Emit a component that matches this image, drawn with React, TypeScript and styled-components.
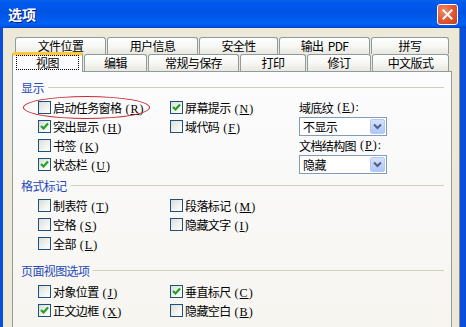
import React from "react";
import styled, { createGlobalStyle, css } from "styled-components";

const Global = createGlobalStyle`
  html, body { margin: 0; padding: 0; background: #ece9d8; }
  body { font-family: "Noto Sans CJK SC", "Noto Sans", sans-serif; }
`;

const FONT = `"Noto Sans CJK SC", "Noto Sans", sans-serif`;

const Window = styled.div`
  width: 466px;
  height: 327px;
  overflow: hidden;
  display: flex;
  flex-direction: column;
  font-family: ${FONT};
  font-size: 12px;
  letter-spacing: -0.6px;
  color: #000;
`;

const TitleBar = styled.div`
  height: 28px;
  flex: none;
  display: flex;
  align-items: center;
  justify-content: space-between;
  padding: 0 8px 0 8px;
  background: linear-gradient(
    to bottom,
    #0a62e8 0%,
    #0058ee 10%,
    #0054e3 45%,
    #0061f5 85%,
    #0055e5 94%,
    #003dc2 100%
  );
`;

const Title = styled.div`
  color: #fff;
  font-weight: 700;
  font-size: 14px;
  letter-spacing: 0;
  text-shadow: 1px 1px 0 #0a1a7a;
`;

const CloseButton = styled.div`
  width: 19px;
  height: 19px;
  border: 1px solid #fff;
  border-radius: 3px;
  background: radial-gradient(circle at 30% 30%, #f08a6a 0%, #e0562e 55%, #c2401c 100%);
  display: flex;
  align-items: center;
  justify-content: center;
`;

const Body = styled.div`
  flex: 1;
  display: flex;
  background: #0a4fdc;
`;

const Frame = styled.div`
  flex: 1;
  margin-left: 3px;
  margin-right: 6px;
  border-right: 1px solid #8a8a80;
  background: #ece9d8;
  padding: 9px 0 0 9px;
  display: flex;
  flex-direction: column;
`;

const TabRow = styled.div<{ $offset: number }>`
  display: flex;
  align-items: flex-end;
  gap: 1px;
  height: 17px;
  margin-left: ${(p) => p.$offset}px;
`;

const Tab = styled.div<{ $w: number; $active?: boolean }>`
  width: ${(p) => p.$w}px;
  box-sizing: border-box;
  height: 17px;
  border: 1px solid #919b9c;
  border-bottom: none;
  border-radius: 3px 3px 0 0;
  background: linear-gradient(to bottom, #ffffff 0%, #f7f7f4 50%, #e8e7e0 100%);
  display: flex;
  align-items: center;
  justify-content: center;
  line-height: 1;
  white-space: pre;
  ${(p) =>
    p.$active &&
    css`
      position: relative;
      z-index: 2;
      height: 20px;
      margin-bottom: -1px;
      border-top: 3px solid #ffc83c;
      box-shadow: inset 0 1px 0 #fbe4a6;
      background: #fcfcfe;
      padding: 0 2px 1px 2px;
    `}
`;

const FocusText = styled.span`
  flex: 1;
  align-self: stretch;
  display: flex;
  align-items: center;
  justify-content: center;
  outline: 1px dotted #000;
  outline-offset: -1px;
  margin: 0 1px 1px 1px;
`;

const Panel = styled.div`
  width: 440px;
  box-sizing: border-box;
  flex: 1;
  border: 1px solid #919b9c;
  border-bottom: none;
  background: linear-gradient(to bottom, #fcfcfe 0%, #f6f5f0 100%);
  padding: 7px 0 0 8px;
  display: flex;
  flex-direction: column;
`;

const GroupHeader = styled.div<{ $top: number }>`
  height: 16px;
  display: flex;
  align-items: center;
  gap: 4px;
  margin-top: ${(p) => p.$top}px;
  margin-right: 7px;
  color: #1f48b8;
  &::after {
    content: "";
    flex: 1;
    height: 1px;
    background: #d0d0bf;
  }
`;

const Rows = styled.div<{ $gap: number }>`
  display: grid;
  grid-template-columns: 132px 129px 88px;
  grid-auto-rows: 19px;
  margin-left: 17px;
  margin-top: ${(p) => p.$gap}px;
`;

const Item = styled.label`
  position: relative;
  display: flex;
  align-items: center;
  gap: 2px;
  white-space: nowrap;
`;

const Box = styled.span`
  width: 13px;
  height: 13px;
  box-sizing: border-box;
  border: 1px solid #1c5180;
  background: linear-gradient(135deg, #dcdcd7 0%, #f3f3ef 60%, #ffffff 100%);
  display: flex;
  align-items: center;
  justify-content: center;
  flex: none;
`;

const Mn = styled.span`
  margin-left: 4px;
  letter-spacing: 1px;
  font-family: "Liberation Serif", serif;
  font-size: 12px;
`;

const Ellipse = styled.span`
  position: absolute;
  left: -15px;
  top: -2px;
  width: 125px;
  height: 21px;
  border: 1.3px solid #c42a32;
  border-radius: 50%;
  pointer-events: none;
`;

const FieldLabel = styled.div`
  display: flex;
  align-items: center;
  white-space: nowrap;
`;

const Select = styled.div`
  height: 19px;
  box-sizing: border-box;
  border: 1px solid #7f9db9;
  background: #fff;
  display: flex;
  align-items: center;
  justify-content: space-between;
  padding: 0 1px 0 3px;
  align-self: center;
`;

const Arrow = styled.span`
  width: 15px;
  height: 15px;
  box-sizing: border-box;
  border: 1px solid #b5c8f1;
  border-radius: 2px;
  background: linear-gradient(to bottom, #d6e3fd 0%, #c1d3fb 50%, #b2c7f6 100%);
  display: flex;
  align-items: center;
  justify-content: center;
`;

const Empty = styled.span``;

function Check() {
  return (
    <svg width="9" height="9" viewBox="0 0 9 9">
      <path d="M1 4 L3.5 6.5 L8 1.5" fill="none" stroke="#21a121" strokeWidth="2.2" />
    </svg>
  );
}

function CB({ label, m, checked, circled }: { label: string; m: string; checked?: boolean; circled?: boolean }) {
  return (
    <Item>
      <Box>{checked && <Check />}</Box>
      <span>
        {label}
        <Mn>
          (<u>{m}</u>)
        </Mn>
      </span>
      {circled && <Ellipse />}
    </Item>
  );
}

function Drop({ value }: { value: string }) {
  return (
    <Select>
      <span>{value}</span>
      <Arrow>
        <svg width="9" height="7" viewBox="0 0 9 7">
          <path d="M1 1.5 L4.5 5 L8 1.5" fill="none" stroke="#4d6185" strokeWidth="2" />
        </svg>
      </Arrow>
    </Select>
  );
}

export default function App() {
  return (
    <>
      <Global />
      <Window>
        <TitleBar>
          <Title>选项</Title>
          <CloseButton>
            <svg width="11" height="11" viewBox="0 0 11 11">
              <path d="M1.5 1.5 L9.5 9.5 M9.5 1.5 L1.5 9.5" stroke="#fff" strokeWidth="2" strokeLinecap="square" />
            </svg>
          </CloseButton>
        </TitleBar>
        <Body>
          <Frame>
            <TabRow $offset={3}>
              <Tab $w={91}>文件位置</Tab>
              <Tab $w={91}>用户信息</Tab>
              <Tab $w={79}>安全性</Tab>
              <Tab $w={91}>输出  PDF</Tab>
              <Tab $w={78}>拼写</Tab>
            </TabRow>
            <TabRow $offset={0}>
              <Tab $w={71} $active>
                <FocusText>视图</FocusText>
              </Tab>
              <Tab $w={63}>编辑</Tab>
              <Tab $w={91}>常规与保存</Tab>
              <Tab $w={66}>打印</Tab>
              <Tab $w={64}>修订</Tab>
              <Tab $w={77}>中文版式</Tab>
            </TabRow>
            <Panel>
              <GroupHeader $top={0}>显示</GroupHeader>
              <Rows $gap={3}>
                <CB label="启动任务窗格" m="R" circled />
                <CB label="屏幕提示" m="N" checked />
                <FieldLabel>
                  域底纹<Mn>(<u>E</u>):</Mn>
                </FieldLabel>
                <CB label="突出显示" m="H" checked />
                <CB label="域代码" m="F" />
                <Drop value="不显示" />
                <CB label="书签" m="K" />
                <Empty />
                <FieldLabel>
                  文档结构图<Mn>(<u>P</u>):</Mn>
                </FieldLabel>
                <CB label="状态栏" m="U" checked />
                <Empty />
                <Drop value="隐藏" />
              </Rows>
              <GroupHeader $top={3}>格式标记</GroupHeader>
              <Rows $gap={3}>
                <CB label="制表符" m="T" />
                <CB label="段落标记" m="M" />
                <Empty />
                <CB label="空格" m="S" />
                <CB label="隐藏文字" m="I" />
                <Empty />
                <CB label="全部" m="L" />
              </Rows>
              <GroupHeader $top={9}>页面视图选项</GroupHeader>
              <Rows $gap={4}>
                <CB label="对象位置" m="J" />
                <CB label="垂直标尺" m="C" checked />
                <Empty />
                <CB label="正文边框" m="X" checked />
                <CB label="隐藏空白" m="B" />
              </Rows>
            </Panel>
          </Frame>
        </Body>
      </Window>
    </>
  );
}
